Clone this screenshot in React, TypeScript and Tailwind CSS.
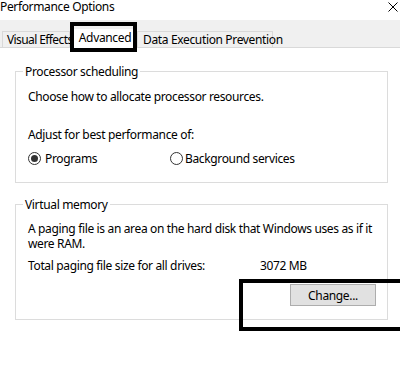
import React from 'react';

const Radio = ({ checked }: { checked?: boolean }) => (
  <span className="w-[13px] h-[13px] rounded-full border border-[#333333] bg-white flex items-center justify-center shrink-0">
    {checked && <span className="w-[7px] h-[7px] rounded-full bg-[#333333]"></span>}
  </span>
);

const App: React.FC = () => {
  return (
    <div className="relative w-[400px] h-[374px] bg-white overflow-hidden text-[12px] leading-[15px] tracking-[-0.35px] text-black font-['Noto_Sans',sans-serif]">
      {/* Title bar */}
      <div className="h-[20px] flex items-start justify-between">
        <span className="-mt-[1px]">Performance Options</span>
        <svg className="mt-[2px] mr-[2px]" width="10" height="10" viewBox="0 0 10 10">
          <path d="M0.5 0.5 L9.5 9.5 M9.5 0.5 L0.5 9.5" stroke="#000" strokeWidth="1" />
        </svg>
      </div>

      {/* Tab strip */}
      <div className="h-[28px] bg-[#f0f0f0] border-b border-[#d9d9d9] flex items-end pl-[2px]">
        <div className="h-[16px] pl-[4px] border border-b-0 border-[#d9d9d9] bg-[#f0f0f0] flex items-center w-[68px]">
          <span className="whitespace-nowrap tracking-[-0.6px]">Visual Effects</span>
        </div>
        <div className="h-[19px] w-[67px] bg-white flex items-start justify-center pt-[1px] pl-[3px] -mb-[1px]">
          <span>Advanced</span>
        </div>
        <div className="h-[16px] w-[136px] px-[5px] border border-b-0 border-[#d9d9d9] bg-[#f0f0f0] flex items-center">
          <span className="whitespace-nowrap">Data Execution Prevention</span>
        </div>
      </div>

      <div className="px-[15px] pr-[12px]">
        {/* Processor scheduling */}
        <div className="relative mt-[23px] h-[112px] border border-[#dcdcdc] pl-[12px] pt-[17px]">
          <span className="absolute left-[7px] -top-[8px] bg-white px-[2px]">Processor scheduling</span>
          <div>Choose how to allocate processor resources.</div>
          <div className="mt-[23px]">Adjust for best performance of:</div>
          <div className="mt-[9px] flex items-center">
            <div className="flex items-center gap-[4px] w-[142px]">
              <Radio checked />
              <span>Programs</span>
            </div>
            <div className="flex items-center gap-[2px]">
              <Radio />
              <span>Background services</span>
            </div>
          </div>
        </div>

        {/* Virtual memory */}
        <div className="relative mt-[21px] h-[116px] border border-[#dcdcdc] pl-[12px] pr-[8px] pt-[16px]">
          <span className="absolute left-[7px] -top-[8px] bg-white px-[2px]">Virtual memory</span>
          <div>A paging file is an area on the hard disk that Windows uses as if it were RAM.</div>
          <div className="mt-[7px] flex">
            <span className="w-[232px]">Total paging file size for all drives:</span>
            <span>3072 MB</span>
          </div>
          <div className="mt-[11px] flex justify-end pr-[3px]">
            <button className="w-[86px] h-[22px] bg-[#e1e1e1] border border-[#adadad] flex items-center justify-center">
              Change...
            </button>
          </div>
        </div>
      </div>

      {/* Annotation boxes */}
      <div className="absolute left-[70px] top-[22px] w-[67px] h-[30px] border-[4px] border-black"></div>
      <div className="absolute left-[239px] top-[279px] w-[170px] h-[52px] border-[4px] border-black"></div>
    </div>
  );
};

export default App;
